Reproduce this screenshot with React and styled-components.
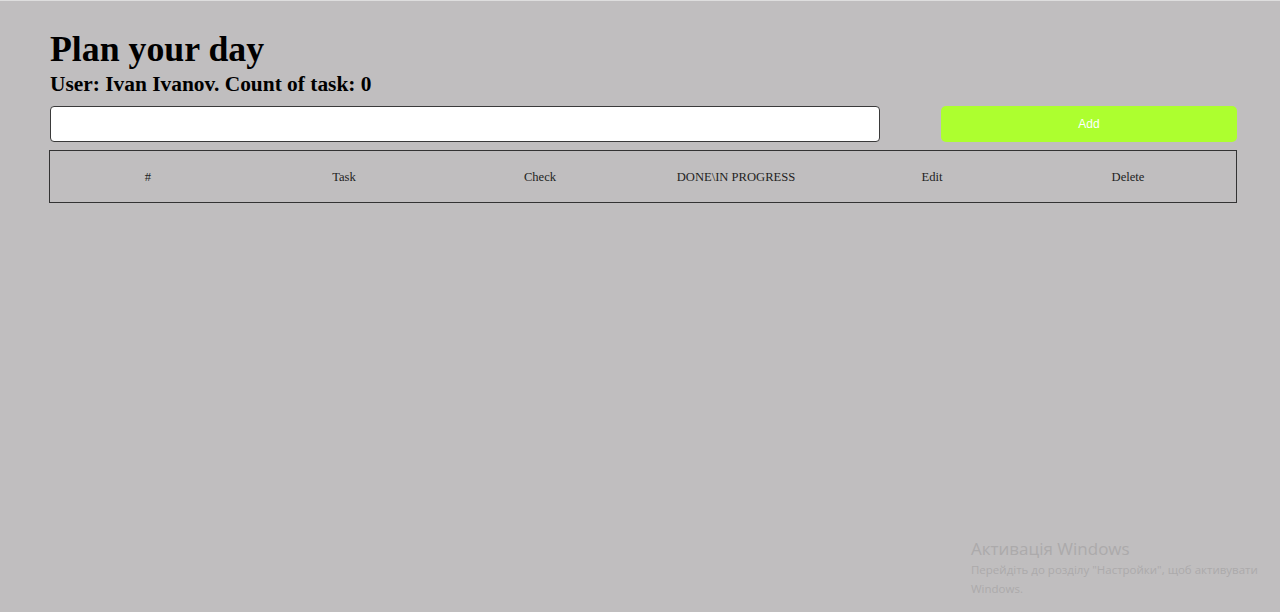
import React, { useState } from 'react';
import styled, { createGlobalStyle } from 'styled-components';

const GlobalStyle = createGlobalStyle`
  html, body {
    margin: 0;
    padding: 0;
    background: #c0bebf;
  }
  body {
    font-family: "Liberation Serif", "Times New Roman", serif;
    color: #000;
    min-height: 612px;
    border-top: 1px solid #dedede;
    box-sizing: border-box;
  }
`;

const Page = styled.div`
  padding: 28px 43px 0 50px;
`;

const Title = styled.h1`
  margin: 0;
  font-size: 35.8px;
  line-height: 40px;
  font-weight: 700;
`;

const SubTitle = styled.h3`
  margin: 3px 0 0;
  font-size: 21.4px;
  line-height: 24px;
  font-weight: 700;
`;

const Form = styled.div`
  display: flex;
  gap: 61px;
  margin-top: 10px;
`;

const TaskInput = styled.input`
  flex: 1;
  height: 36px;
  box-sizing: border-box;
  border: 1px solid #3a3a3a;
  border-radius: 4px;
  background: #fff;
  padding: 0 8px;
  font-size: 14px;
  outline: none;
`;

const AddButton = styled.button`
  width: 296px;
  height: 36px;
  border: none;
  border-radius: 5px;
  background: #adff2f;
  color: #fff;
  font-family: "Liberation Sans", Arial, sans-serif;
  font-size: 12px;
  cursor: pointer;
`;

const Table = styled.div`
  margin-top: 8px;
  margin-left: -1px;
  border: 1px solid #333;
  height: 53px;
  box-sizing: border-box;
  display: grid;
  grid-template-columns: repeat(6, 196px);
  align-items: center;
`;

const HeadCell = styled.div`
  text-align: center;
  font-size: 12.6px;
  color: #1e1e1e;
  padding-top: 1px;
`;

const Watermark = styled.div`
  position: absolute;
  left: 971px;
  top: 538px;
  font-family: "Open Sans", "Noto Sans", sans-serif;
  color: #acaaab;
  white-space: nowrap;
  pointer-events: none;
`;

const WatermarkTitle = styled.div`
  font-size: 17px;
  line-height: 22px;
`;

const WatermarkText = styled.div`
  font-size: 11.5px;
  line-height: 19px;
`;

const columns = ['#', 'Task', 'Check', 'DONE\\IN PROGRESS', 'Edit', 'Delete'];

const App = () => {
  const [task, setTask] = useState('');
  const tasks = [];
  return (
    <>
      <GlobalStyle />
      <Page>
        <Title>Plan your day</Title>
        <SubTitle>{`User: Ivan Ivanov. Count of task: ${tasks.length}`}</SubTitle>
        <Form>
          <TaskInput value={task} onChange={(e) => setTask(e.target.value)} />
          <AddButton type="button">Add</AddButton>
        </Form>
        <Table>
          {columns.map((c) => (
            <HeadCell key={c}>{c}</HeadCell>
          ))}
        </Table>
      </Page>
      <Watermark>
        <WatermarkTitle>Активація Windows</WatermarkTitle>
        <WatermarkText>Перейдіть до розділу &quot;Настройки&quot;, щоб активувати</WatermarkText>
        <WatermarkText>Windows.</WatermarkText>
      </Watermark>
    </>
  );
};

export default App;
